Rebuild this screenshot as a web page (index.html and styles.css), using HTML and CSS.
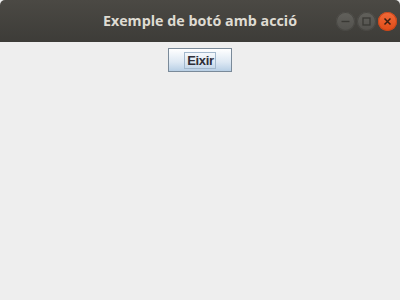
FILE: index.html
```html
<!DOCTYPE html>
<html lang="ca">
<head>
    <meta charset="UTF-8">
    <title>Exemple de botó amb acció</title>
    <link rel="stylesheet" href="styles.css">
</head>
<body>
    <div class="window">
        <div class="titlebar">
            <span class="title">Exemple de botó amb acció</span>
            <div class="controls">
                <span class="ctl">
                    <svg width="19" height="19" viewBox="0 0 19 19"><path d="M5.5 9.5h8" stroke="#3a3935" stroke-width="1.4"/></svg>
                </span>
                <span class="ctl">
                    <svg width="19" height="19" viewBox="0 0 19 19"><rect x="6" y="6" width="7" height="7" fill="none" stroke="#3a3935" stroke-width="1.3"/></svg>
                </span>
                <span class="ctl close">
                    <svg width="19" height="19" viewBox="0 0 19 19"><path d="M6.5 6.5l6 6M12.5 6.5l-6 6" stroke="#3a1f12" stroke-width="1.5"/></svg>
                </span>
            </div>
        </div>
        <div class="content">
            <button class="btn"><span class="focus">Eixir</span></button>
        </div>
    </div>
</body>
</html>
```

FILE: styles.css
```css
* {
    margin: 0;
    padding: 0;
    box-sizing: border-box;
}

body {
    width: 400px;
    height: 300px;
    overflow: hidden;
    background: #eeeeee;
}

.window {
    display: flex;
    flex-direction: column;
    height: 300px;
}

.titlebar {
    position: relative;
    height: 42px;
    background: linear-gradient(#4b4944, #3d3c38);
    border-radius: 5px 5px 0 0;
    display: flex;
    align-items: center;
    justify-content: center;
}

.title {
    font-family: "Open Sans", "DejaVu Sans", sans-serif;
    font-weight: bold;
    font-size: 14.3px;
    color: #dfdbd2;
    margin-top: -1px;
}

.controls {
    position: absolute;
    right: 3px;
    top: 12px;
    display: flex;
    gap: 2px;
}

.ctl {
    width: 19px;
    height: 19px;
    border-radius: 50%;
    background: linear-gradient(#62615c, #52514d);
    box-shadow: inset 0 0 0 1px #484743;
    display: flex;
}

.ctl.close {
    background: linear-gradient(#f26a3a, #df4b16);
    box-shadow: inset 0 0 0 1px #c9461a;
}

.content {
    flex: 1;
    background: #eeeeee;
    display: flex;
    justify-content: center;
    padding-top: 6px;
}

.btn {
    width: 64px;
    height: 24px;
    border: 1px solid #7a8a99;
    background: linear-gradient(#ffffff, #dde8f3 60%, #b8cfe5);
    display: flex;
    align-items: center;
    justify-content: center;
    font-family: "Liberation Sans", Arial, sans-serif;
    font-weight: bold;
    font-size: 13px;
    letter-spacing: -0.3px;
    color: #2f2f38;
}

.focus {
    border: 1px solid #a3b8cc;
    padding: 0 1px 0 2px;
    line-height: 15px;
}
```
